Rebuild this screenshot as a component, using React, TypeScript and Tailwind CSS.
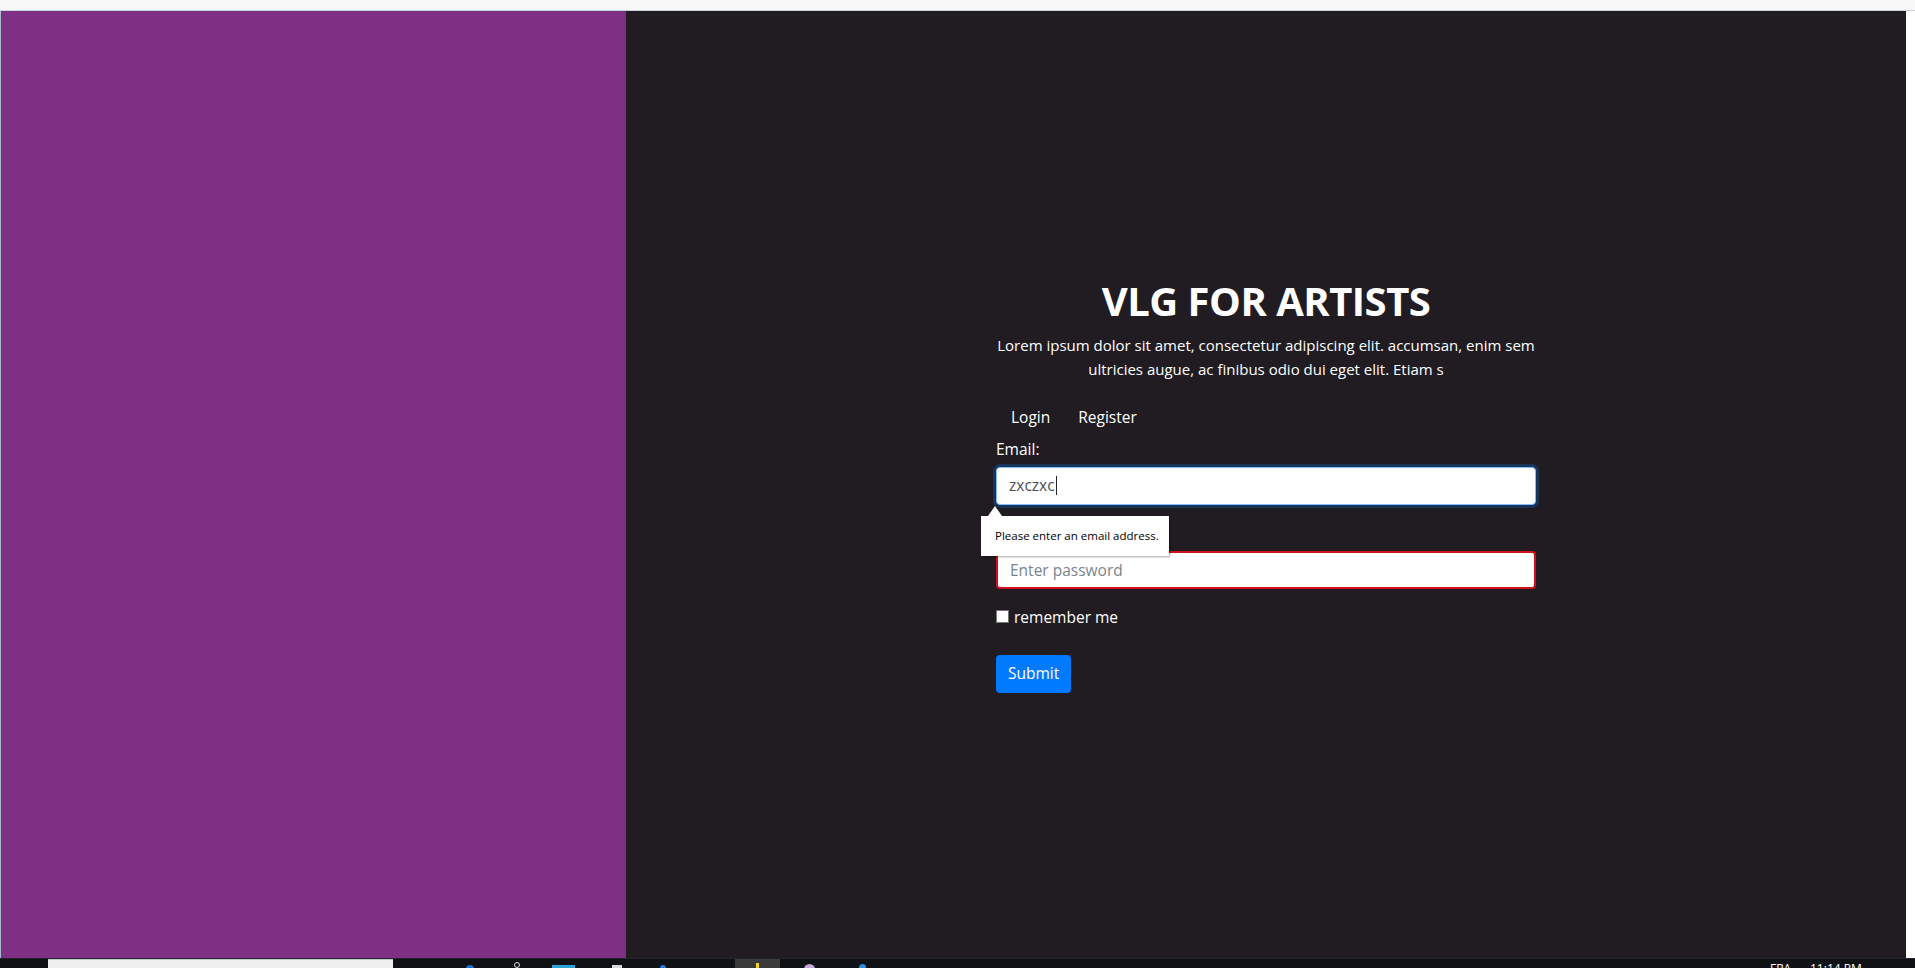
import React from "react";

const font = { fontFamily: '"Open Sans", "Noto Sans", "Liberation Sans", sans-serif' };

export default function App() {
  return (
    <div className="flex h-[968px] w-[1915px] flex-col overflow-hidden bg-[#201c22]" style={font}>
      {/* top strip */}
      <div className="h-[11px] shrink-0 border-b border-[#c7d2da] bg-[#f8f8f8]" />

      <div className="flex min-h-0 flex-1">
        <div className="w-px shrink-0 bg-[#a9bccb]" />
        <div className="w-[625px] shrink-0 bg-[#7f2f84]" />

        <main className="flex flex-1 items-center justify-center bg-[#201c22]">
          <div className="w-[540px] text-white">
            <h1 className="text-center text-[40px] font-bold leading-[48px] tracking-[-0.5px]">VLG FOR ARTISTS</h1>
            <p className="mt-2 whitespace-nowrap text-center text-[15px] leading-6">
              Lorem ipsum dolor sit amet, consectetur adipiscing elit. accumsan, enim sem
              <br />
              ultricies augue, ac finibus odio dui eget elit. Etiam s
            </p>

            <nav className="mt-4 flex text-[15.5px] leading-6">
              <a className="py-2 pl-[15px] pr-[14px]">Login</a>
              <a className="px-[14px] py-2">Register</a>
            </nav>

            <form className="relative">
              <div className="mb-4">
                <label className="mb-[6px] block text-[15.5px] leading-6">Email:</label>
                <div
                  role="textbox"
                  className="flex h-[38px] items-center rounded-[4px] border border-[#80bdff] bg-white px-3 text-[15.5px] text-[#495057] shadow-[0_0_0_3px_rgba(0,123,255,0.25)]"
                >
                  <span>zxczxc</span>
                  <span className="ml-px inline-block h-[19px] w-px bg-[#222]" />
                </div>
              </div>

              <div className="mb-4">
                <label className="mb-[6px] block text-[15.5px] leading-6">Password:</label>
                <input
                  type="password"
                  placeholder="Enter password"
                  className="block h-[38px] w-full rounded-[4px] border-2 border-[#d40e1a] bg-white px-3 text-[15.5px] text-[#495057] outline-none placeholder:text-[#7a848e]"
                />
              </div>

              <label className="flex items-center text-[15.5px] leading-6">
                <span className="mr-[5px] inline-block h-[13px] w-[13px] border border-[#767676] bg-white" />
                remember me
              </label>

              <button
                type="button"
                className="mt-[26px] h-[38px] rounded-[4px] bg-[#007bff] px-3 text-[15.5px] text-white"
              >
                Submit
              </button>

              {/* validation tooltip */}
              <div className="absolute left-[-15px] top-[69px]">
                <div className="ml-[7px] h-0 w-0 border-x-[7px] border-b-[10px] border-x-transparent border-b-white" />
                <div className="flex h-[40px] w-[188px] items-center bg-white pl-[14px] text-[11.5px] text-black shadow-[1px_1px_2px_rgba(0,0,0,0.35)]">
                  Please enter an email address.
                </div>
              </div>
            </form>
          </div>
        </main>

        <div className="w-[9px] shrink-0 bg-white" />
      </div>

      {/* taskbar (only top visible) */}
      <div className="relative flex h-[10px] shrink-0 items-start overflow-hidden border-t border-[#22252b] bg-[#0f1115]">
        <div className="ml-[48px] h-[10px] w-[345px] border-t border-[#c8c8c8] bg-[#f0f0f0]" />
        <div className="ml-[73px] mt-[6px] h-[6px] w-[8px] rounded-t-full bg-[#1f6fd1]" />
        <div className="ml-[40px] mt-[3px] h-[6px] w-[6px] rounded-full border border-[#dddddd]" />
        <div className="ml-[32px] mt-[6px] h-[6px] w-[23px] bg-[#2aa3d6]" />
        <div className="ml-[37px] mt-[6px] h-[6px] w-[10px] bg-[#d8d8d8]" />
        <div className="ml-[38px] mt-[6px] h-[6px] w-[6px] rounded-t-full bg-[#1e7bd8]" />
        <div className="ml-[69px] flex h-[10px] w-[45px] justify-center bg-[#3a3a3a]">
          <div className="mt-[4px] h-[6px] w-[3px] bg-[#f2d22e]" />
        </div>
        <div className="ml-[24px] mt-[5px] h-[8px] w-[11px] rounded-t-full bg-[#c7a8d8]" />
        <div className="ml-[44px] mt-[5px] h-[6px] w-[7px] rounded-t-full bg-[#2a8be0]" />
        <div className="absolute left-[1770px] top-[3px] text-[12px] leading-[14px] text-white">FRA</div>
        <div className="absolute left-[1810px] top-[3px] text-[12px] leading-[14px] text-white">11:14 PM</div>
      </div>
    </div>
  );
}
